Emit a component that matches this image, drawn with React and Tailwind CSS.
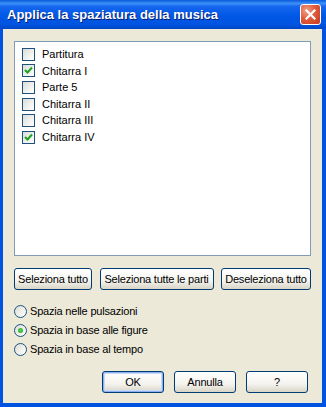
import React, { useState } from 'react';

const parts = [
  { name: 'Partitura', checked: false },
  { name: 'Chitarra I', checked: true },
  { name: 'Parte 5', checked: false },
  { name: 'Chitarra II', checked: false },
  { name: 'Chitarra III', checked: false },
  { name: 'Chitarra IV', checked: true },
];

const radios = ['Spazia nelle pulsazioni', 'Spazia in base alle figure', 'Spazia in base al tempo'];

const CheckBox = ({ checked }) => (
  <div className="w-[13px] h-[13px] border border-[#1C5180] bg-[linear-gradient(135deg,#DCDCD7_0%,#F2F2EE_60%,#FFFFFF_100%)] flex items-center justify-center shrink-0">
    {checked && (
      <svg width="9" height="9" viewBox="0 0 9 9">
        <path d="M1 4 L3.5 6.5 L8 1.5" stroke="#21A121" strokeWidth="2" fill="none" />
      </svg>
    )}
  </div>
);

const Radio = ({ selected }) => (
  <div className="w-[13px] h-[13px] rounded-full border border-[#1C5180] bg-[linear-gradient(135deg,#DCDCD7_0%,#F2F2EE_60%,#FFFFFF_100%)] flex items-center justify-center shrink-0">
    {selected && <div className="w-[5px] h-[5px] rounded-full bg-[radial-gradient(circle,#55D551_0%,#21A121_100%)]" />}
  </div>
);

const XpButton = ({ children, className = '', def = false }) => (
  <button
    className={`h-[22px] rounded-[3px] border border-[#003C74] bg-[linear-gradient(180deg,#FFFFFF_0%,#F4F3EE_60%,#D8D5C6_100%)] text-black text-[11px] leading-none px-0 whitespace-nowrap tracking-[-0.2px] ${def ? 'shadow-[inset_0_0_0_1px_#8EB0F0,inset_0_0_0_2px_#C8D9F8]' : ''} ${className}`}
  >
    {children}
  </button>
);

export default function App() {
  const [items] = useState(parts);
  const [mode] = useState(1);

  return (
    <div className="w-[326px] h-[407px] bg-[#0053E1] flex flex-col font-['Liberation_Sans',Arial,sans-serif] text-[11px] text-black select-none">
      <div className="h-[29px] shrink-0 flex items-center justify-between pl-[7px] pr-[5px] bg-[linear-gradient(180deg,#0A5ADB_0%,#3D8FF8_12%,#1666EE_22%,#0058E6_55%,#0054E0_85%,#0046C4_100%)]">
        <span className="text-white font-bold text-[13px] [text-shadow:1px_1px_0_#0A1E6E]">
          Applica la spaziatura della musica
        </span>
        <div className="w-[21px] h-[21px] rounded-[3px] border border-white bg-[radial-gradient(circle_at_30%_30%,#F0A38B_0%,#E05B3B_45%,#C43A1C_100%)] flex items-center justify-center">
          <svg width="11" height="11" viewBox="0 0 11 11">
            <path d="M1.5 1.5 L9.5 9.5 M9.5 1.5 L1.5 9.5" stroke="white" strokeWidth="2.2" strokeLinecap="square" />
          </svg>
        </div>
      </div>

      <div className="flex-1 ml-[3px] mr-[4px] mb-[4px] bg-[#ECE9D8] flex flex-col px-[11px] pt-[12px]">
        <div className="h-[215px] border border-[#7F9DB9] bg-white flex flex-col pt-[4px] pl-[7px]">
          {items.map((p) => (
            <div key={p.name} className="h-[16.6px] flex items-center gap-[7px]">
              <CheckBox checked={p.checked} />
              <span>{p.name}</span>
            </div>
          ))}
        </div>

        <div className="mt-[12px] flex justify-between">
          <XpButton className="w-[78px]">Seleziona tutto</XpButton>
          <XpButton className="w-[114px]">Seleziona tutte le parti</XpButton>
          <XpButton className="w-[90px]">Deseleziona tutto</XpButton>
        </div>

        <div className="mt-[12px] flex flex-col">
          {radios.map((r, i) => (
            <div key={r} className="h-[19px] flex items-center gap-[3px]">
              <Radio selected={i === mode} />
              <span className="tracking-[-0.2px]">{r}</span>
            </div>
          ))}
        </div>

        <div className="mt-[12px] flex justify-end gap-[10px] pr-[3px]">
          <XpButton className="w-[62px]" def>OK</XpButton>
          <XpButton className="w-[62px]">Annulla</XpButton>
          <XpButton className="w-[62px]">?</XpButton>
        </div>
      </div>
    </div>
  );
}
